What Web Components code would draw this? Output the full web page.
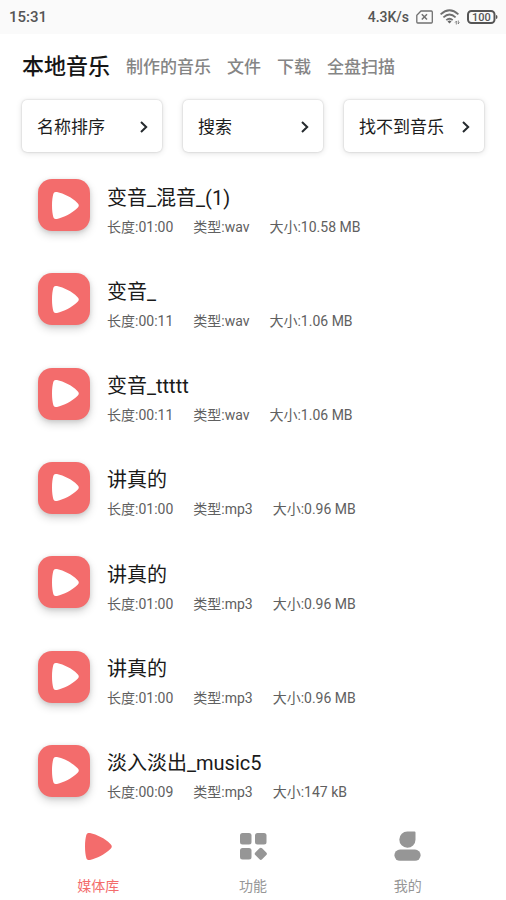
<!DOCTYPE html>
<html lang="zh-CN">
<head>
<meta charset="utf-8">
<meta name="viewport" content="width=device-width, initial-scale=1">
<title>本地音乐</title>
<style>
  :root { --accent: #f36c6c; --muted: #969696; }
  body {
    margin: 0;
    background: #fff;
    color: #1c1c1c;
    font-family: Roboto, "Noto Sans CJK SC", sans-serif;
  }
</style>
</head>
<body>
<music-app></music-app>
<script>
const define = (name, html, setup) => {
  const tpl = document.createElement('template');
  tpl.innerHTML = html;
  customElements.define(name, class extends HTMLElement {
    constructor() {
      super();
      this.attachShadow({ mode: 'open' }).append(tpl.content.cloneNode(true));
    }
    connectedCallback() { if (setup) setup(this, this.shadowRoot); }
  });
};

const PLAY = 'M0 13.500C0 8.500 .6 4.600 1.300 2C1.800.3 3.200-.3 5 .1C12 1.600 19.600 5.400 25.400 10.900Q28.200 13.500 25.400 16.100C19.600 21.600 12 25.400 5 26.900C3.200 27.300 1.800 26.700 1.300 25C.6 22.400 0 18.500 0 13.500Z';

define('status-bar', `
  <style>
    :host { display: flex; align-items: center; justify-content: space-between; height: 34px; padding: 0 8px 0 9px; background: #fafafa; color: #555; font-weight: 500; }
    time { font-size: 15px; }
    div { display: flex; align-items: center; gap: 7px; font-size: 14px; }
    svg { display: block; }
  </style>
  <time>15:31</time>
  <div>
    <span>4.3K/s</span>
    <svg width="17" height="14" viewBox="0 0 17 14" fill="none" stroke="#707070" stroke-width="1.300"><path d="M5 1H15.300Q16.300 1 16.300 2V12Q16.300 13 15.300 13H1.800Q.8 13 .8 12V5.200Z"/><path d="M5.800 4.300L11 9.500M11 4.300L5.800 9.500" stroke-width="1.500"/></svg>
    <svg width="20" height="16" viewBox="0 0 20 16" fill="none" stroke="#707070" stroke-width="1.800"><path d="M.6 5.300Q9.500-2.700 18.400 5.300M3.400 8.300Q9.500 2.700 15.600 8.300M6.300 11.200Q9.500 8.300 12.700 11.200"/><path d="M7.500 12.400Q9.500 10.800 11.500 12.400L9.500 14.600Z" fill="#666" stroke="none"/><path d="M16.300 15.500V12M16.600 12L15 13.600M18.300 11.500V15M18 15L19.500 13.400" stroke-width=".8"/></svg>
    <svg width="31" height="14" viewBox="0 0 31 14"><rect x="1" y="1" width="26.500" height="12" rx="3.500" fill="none" stroke="#555" stroke-width="2"/><path d="M29 5Q30.500 5.200 30.500 7T29 9Z" fill="#555"/><text x="14.300" y="11" text-anchor="middle" font-size="11" fill="#555">100</text></svg>
  </div>`);

define('source-tab', `
  <style>
    :host { display: block; }
    button { display: block; border: 0; padding: 0; background: none; font: 500 17px/32px Roboto, "Noto Sans CJK SC", sans-serif; color: #858585; white-space: nowrap; }
    :host([active]) button { font-size: 22px; color: #161616; }
  </style>
  <button type="button"><slot></slot></button>`);

define('filter-card', `
  <style>
    :host { display: block; flex: 1; min-width: 0; }
    button { display: flex; align-items: center; justify-content: space-between; width: 100%; height: 52px; padding: 1px 13px 0 15px; border: 0; border-radius: 5px; background: #fff; box-shadow: 0 0 2px rgba(0,0,0,.2), 0 1px 6px rgba(0,0,0,.13); font: 400 17px/24px Roboto, "Noto Sans CJK SC", sans-serif; color: #1c1c1c; white-space: nowrap; }
  </style>
  <button type="button"><slot></slot><svg width="10" height="12" viewBox="0 0 10 12" fill="none" stroke="#252a2e" stroke-width="2"><path d="M2 1L7.200 6L2 11"/></svg></button>`);

define('track-item', `
  <style>
    :host { display: flex; flex: 1 0 auto; align-items: center; min-height: 88px; gap: 17px; padding: 0 22px 0 38px; }
    button { display: grid; place-items: center; flex: none; width: 52px; height: 52px; padding: 0; border: 0; border-radius: 14px; background: var(--accent); box-shadow: 0 4px 8px rgba(0,0,0,.17), 0 1px 4px rgba(0,0,0,.1); }
    svg { margin-left: 3px; }
    h2 { margin: 0; font-size: 20px; line-height: 30px; font-weight: 400; color: #1a1a1a; }
    p { display: flex; gap: 20px; margin: 3px 0 0; font-size: 14px; line-height: 22px; color: #606060; }
    .text { min-width: 0; padding-top: 10px; }
  </style>
  <button type="button" aria-label="播放"><svg width="27" height="27" viewBox="0 0 27 27"><path fill="#fff" d="${PLAY}"/></svg></button>
  <div class="text">
    <h2><slot></slot></h2>
    <p><span class="length"></span><span class="type"></span><span class="size"></span></p>
  </div>`, (el, root) => {
  root.querySelector('.length').textContent = '长度:' + el.getAttribute('length');
  root.querySelector('.type').textContent = '类型:' + el.getAttribute('type');
  root.querySelector('.size').textContent = '大小:' + el.getAttribute('size');
});

define('nav-item', `
  <style>
    :host { display: block; flex: 1; color: var(--muted); }
    :host([active]) { color: var(--accent); }
    a { display: flex; flex-direction: column; align-items: center; gap: 13px; padding-top: 13px; color: inherit; text-decoration: none; font-size: 14px; line-height: 24px; }
    ::slotted(svg) { display: block; fill: currentColor; }
  </style>
  <a href="#"><slot name="icon"></slot><span><slot></slot></span></a>`);

define('music-app', `
  <style>
    :host { display: flex; flex-direction: column; min-height: 100vh; }
    .tabs { display: flex; align-items: center; gap: 16px; padding: 17px 22px 0; }
    .filters { display: flex; gap: 21px; padding: 17px 22px 6px; }
    main { display: flex; flex: 1; flex-direction: column; }
    .bottom { display: flex; height: 82px; padding: 0 21px; }
  </style>
  <status-bar></status-bar>
  <nav class="tabs">
    <source-tab active>本地音乐</source-tab><source-tab>制作的音乐</source-tab><source-tab>文件</source-tab><source-tab>下载</source-tab><source-tab>全盘扫描</source-tab>
  </nav>
  <div class="filters">
    <filter-card>名称排序</filter-card><filter-card>搜索</filter-card><filter-card>找不到音乐</filter-card>
  </div>
  <main>
    <track-item length="01:00" type="wav" size="10.58 MB">变音_混音_(1)</track-item>
    <track-item length="00:11" type="wav" size="1.06 MB">变音_</track-item>
    <track-item length="00:11" type="wav" size="1.06 MB">变音_ttttt</track-item>
    <track-item length="01:00" type="mp3" size="0.96 MB">讲真的</track-item>
    <track-item length="01:00" type="mp3" size="0.96 MB">讲真的</track-item>
    <track-item length="01:00" type="mp3" size="0.96 MB">讲真的</track-item>
    <track-item length="00:09" type="mp3" size="147 kB">淡入淡出_music5</track-item>
  </main>
  <nav class="bottom">
    <nav-item active><svg slot="icon" width="27" height="30" viewBox="0 0 27 30"><path transform="translate(0 2)" d="${PLAY}"/></svg>媒体库</nav-item>
    <nav-item><svg slot="icon" width="27" height="30" viewBox="0 0 27 30"><rect x="0" y="2" width="11.500" height="11.500" rx="2.500"/><rect x="15" y="2" width="11.500" height="11.500" rx="2.500"/><rect x="0" y="17" width="11.500" height="11.500" rx="2.500"/><rect x="16" y="18" width="9.600" height="9.600" rx="1.800" transform="rotate(45 20.800 22.800)"/></svg>功能</nav-item>
    <nav-item><svg slot="icon" width="27" height="30" viewBox="0 0 27 30"><path d="M13.500.5H20.500Q21.500.5 21.500 1.500V8.700A8.100 8.100 0 1 1 13.500.5Z"/><rect x=".4" y="18.500" width="26.200" height="11.300" rx="5.600"/></svg>我的</nav-item>
  </nav>`);
</script>
</body>
</html>
